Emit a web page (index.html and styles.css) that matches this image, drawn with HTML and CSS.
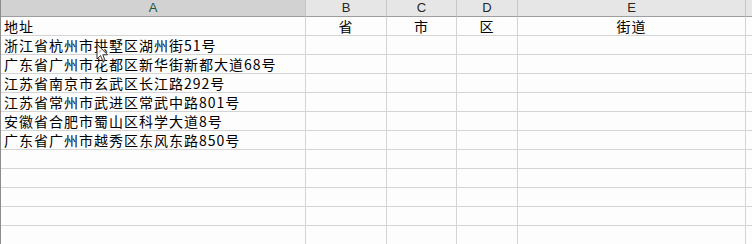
FILE: index.html
```html
<!DOCTYPE html>
<html lang="zh-CN">
<head>
  <meta charset="UTF-8">
  <title>地址拆分</title>
  <link rel="stylesheet" href="styles.css">
</head>
<body>

<div class="sheet">
  <!-- 列标题 -->
  <div class="row head">
    <div class="cell col-a selected">A</div>
    <div class="cell col-b">B</div>
    <div class="cell col-c">C</div>
    <div class="cell col-d">D</div>
    <div class="cell col-e">E</div>
    <div class="cell col-f"></div>
  </div>

  <div class="row">
    <div class="cell col-a">地址</div>
    <div class="cell col-b center">省</div>
    <div class="cell col-c center">市</div>
    <div class="cell col-d center">区</div>
    <div class="cell col-e center">街道</div>
    <div class="cell col-f"></div>
  </div>
  <div class="row">
    <div class="cell col-a">浙江省杭州市拱墅区湖州街51号</div>
    <div class="cell col-b"></div><div class="cell col-c"></div><div class="cell col-d"></div><div class="cell col-e"></div><div class="cell col-f"></div>
  </div>
  <div class="row">
    <div class="cell col-a">广东省广州市花都区新华街新都大道68号</div>
    <div class="cell col-b"></div><div class="cell col-c"></div><div class="cell col-d"></div><div class="cell col-e"></div><div class="cell col-f"></div>
  </div>
  <div class="row">
    <div class="cell col-a">江苏省南京市玄武区长江路292号</div>
    <div class="cell col-b"></div><div class="cell col-c"></div><div class="cell col-d"></div><div class="cell col-e"></div><div class="cell col-f"></div>
  </div>
  <div class="row">
    <div class="cell col-a">江苏省常州市武进区常武中路801号</div>
    <div class="cell col-b"></div><div class="cell col-c"></div><div class="cell col-d"></div><div class="cell col-e"></div><div class="cell col-f"></div>
  </div>
  <div class="row">
    <div class="cell col-a">安徽省合肥市蜀山区科学大道8号</div>
    <div class="cell col-b"></div><div class="cell col-c"></div><div class="cell col-d"></div><div class="cell col-e"></div><div class="cell col-f"></div>
  </div>
  <div class="row">
    <div class="cell col-a">广东省广州市越秀区东风东路850号</div>
    <div class="cell col-b"></div><div class="cell col-c"></div><div class="cell col-d"></div><div class="cell col-e"></div><div class="cell col-f"></div>
  </div>
  <div class="row">
    <div class="cell col-a"></div><div class="cell col-b"></div><div class="cell col-c"></div><div class="cell col-d"></div><div class="cell col-e"></div><div class="cell col-f"></div>
  </div>
  <div class="row">
    <div class="cell col-a"></div><div class="cell col-b"></div><div class="cell col-c"></div><div class="cell col-d"></div><div class="cell col-e"></div><div class="cell col-f"></div>
  </div>
  <div class="row">
    <div class="cell col-a"></div><div class="cell col-b"></div><div class="cell col-c"></div><div class="cell col-d"></div><div class="cell col-e"></div><div class="cell col-f"></div>
  </div>
  <div class="row">
    <div class="cell col-a"></div><div class="cell col-b"></div><div class="cell col-c"></div><div class="cell col-d"></div><div class="cell col-e"></div><div class="cell col-f"></div>
  </div>
  <div class="row">
    <div class="cell col-a"></div><div class="cell col-b"></div><div class="cell col-c"></div><div class="cell col-d"></div><div class="cell col-e"></div><div class="cell col-f"></div>
  </div>

  <!-- 鼠标指针 -->
  <svg class="pointer" width="13" height="21" viewBox="0 0 13 21">
    <path d="M1 1 L1 16 L4.5 12.5 L7 18.5 L9.2 17.5 L6.8 11.8 L11.5 11.8 Z" fill="#ffffff" fill-opacity="0.75" stroke="#333" stroke-width="1" stroke-linejoin="round"/>
  </svg>
</div>

</body>
</html>
```

FILE: styles.css
```css
body {
  margin: 0;
  background: #fdfdfd;
  font-family: "Noto Sans CJK SC", "Microsoft YaHei", sans-serif;
  overflow: hidden;
}

.sheet {
  position: relative;
  border-left: 1px solid #8c8c8c;
}

.row {
  display: flex;
  height: 19px;
}

.cell {
  box-sizing: border-box;
  height: 19px;
  border-right: 1px solid #d4d4d4;
  border-bottom: 1px solid #d4d4d4;
  font-size: 14px;
  line-height: 18px;
  letter-spacing: 1px;
  padding-left: 3px;
  white-space: nowrap;
  color: #000;
}

.center {
  text-align: center;
  padding-left: 0;
}

.col-a { width: 305px; }
.col-b { width: 81px; }
.col-c { width: 70px; }
.col-d { width: 61px; }
.col-e { width: 228px; }
.col-f { flex: 1; border-right: none; }

/* header strip */
.head {
  height: 17px;
}

.head .cell {
  height: 17px;
  background: #e6e6e6;
  border-right-color: #c6c6c6;
  border-bottom: 1px solid #9e9e9e;
  font-family: "Liberation Sans", Arial, sans-serif;
  font-size: 13px;
  line-height: 16px;
  letter-spacing: 0;
  text-align: center;
  padding-left: 0;
  color: #262626;
}

.head .selected {
  background: #d2d2d2;
  color: #1e5a3c;
}

.pointer {
  position: absolute;
  left: 95px;
  top: 43px;
}
```
